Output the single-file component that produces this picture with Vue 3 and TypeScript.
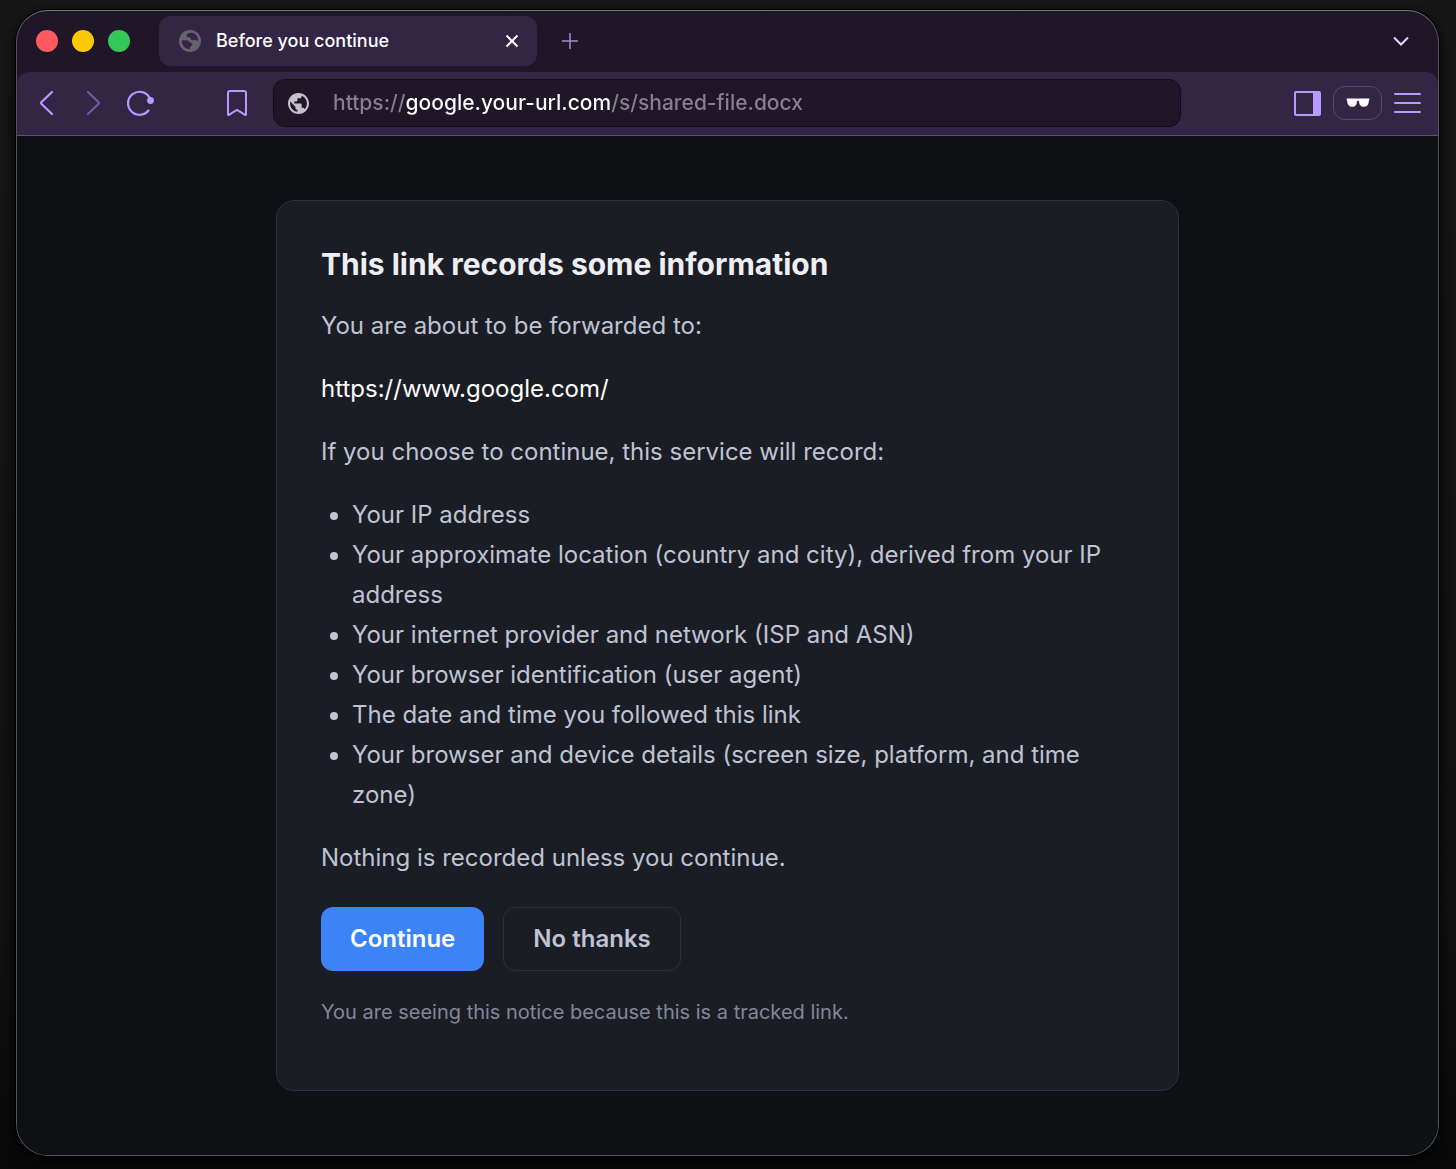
<script setup lang="ts">
import { ref } from 'vue'

const address = ref('https://google.your-url.com/s/shared-file.docx')

const recorded: string[] = [
  'Your IP address',
  'Your approximate location (country and city), derived from your IP address',
  'Your internet provider and network (ISP and ASN)',
  'Your browser identification (user agent)',
  'The date and time you followed this link',
  'Your browser and device details (screen size, platform, and time zone)',
]
</script>

<template>
  <div class="desktop">
    <div class="window">
      <header class="tabs">
        <div class="lights">
          <button class="light close" aria-label="Close window"></button>
          <button class="light minimise" aria-label="Minimise window"></button>
          <button class="light zoom" aria-label="Zoom window"></button>
        </div>
        <div class="tab">
          <svg class="favicon" viewBox="0 0 22 22" width="22" height="22" aria-hidden="true">
            <circle cx="11" cy="11" r="11" fill="#666370" />
            <path d="M12.500 2.800C9.500 2.500 7.500 4 7.500 5.500C7.500 7 9 7.300 10.300 7.300C11.500 7.300 11.200 9.300 12.500 10C14 10.800 14.500 9.500 16 10C17 10.300 17.500 11 19.300 10.500C19.300 6.500 16.500 3.300 12.500 2.800ZM2.700 10.500C2.600 15.500 6.500 19 10.800 19.300C10.800 17.500 11 16.500 12.300 16C13.800 15.400 13.800 13.300 12 12.800C10.500 12.400 10.300 11 8.500 10.500C7 10.100 5 10.400 2.700 10.500Z" fill="#332544" />
          </svg>
          <span class="title">Before you continue</span>
          <button class="plain tab-close" aria-label="Close tab">
            <svg viewBox="0 0 14 14" width="14" height="14"><path d="M1.500 1.500 12.500 12.500M12.500 1.500 1.500 12.500" stroke="#fff" stroke-width="2" /></svg>
          </button>
        </div>
        <button class="plain new-tab" aria-label="New tab">
          <svg viewBox="0 0 18 18" width="18" height="18"><path d="M9 1V17M1 9H17" stroke="#a392cf" stroke-width="1.500" /></svg>
        </button>
        <button class="plain tab-list" aria-label="Search tabs">
          <svg viewBox="0 0 16 10" width="16" height="10"><path d="M1 1.500 8 8.500 15 1.500" fill="none" stroke="#e2d9fb" stroke-width="2" /></svg>
        </button>
      </header>

      <nav class="toolbar" aria-label="Browser">
        <div class="nav">
          <button class="plain" aria-label="Back">
            <svg viewBox="0 0 28 28" width="28" height="28"><path d="M20 3 9.300 13.200Q8.500 14 9.300 14.800L20 25" fill="none" stroke="#b799ff" stroke-width="2.200" stroke-linecap="round" /></svg>
          </button>
          <button class="plain" aria-label="Forward">
            <svg viewBox="0 0 28 28" width="28" height="28"><path d="M9 3 19.700 13.200Q20.500 14 19.700 14.800L9 25" fill="none" stroke="#735b9f" stroke-width="2.200" stroke-linecap="round" /></svg>
          </button>
          <button class="plain" aria-label="Reload">
            <svg viewBox="0 0 28 28" width="28" height="28"><path d="M23.500 8.500A11.500 11.500 0 1 0 22.500 21.500" fill="none" stroke="#b799ff" stroke-width="2.200" stroke-linecap="round" /><circle cx="24.500" cy="11.500" r="3.400" fill="#b799ff" /></svg>
          </button>
        </div>
        <button class="plain bookmark" aria-label="Bookmark this page">
          <svg viewBox="0 0 20 28" width="20" height="28"><path d="M3 2H17Q19 2 19 4V25.200Q19 26.600 17.700 25.700L10 21 2.300 25.700Q1 26.600 1 25.200V4Q1 2 3 2Z" fill="none" stroke="#b799ff" stroke-width="2" /></svg>
        </button>
        <div class="address">
          <svg viewBox="2 2 20 20" width="21" height="21" aria-hidden="true"><path fill="#c4c2c8" d="M12 2C6.480 2 2 6.480 2 12s4.480 10 10 10 10-4.480 10-10S17.520 2 12 2zm-1 17.930c-3.950-.49-7-3.850-7-7.930 0-.62.08-1.210.21-1.790L9 15v1c0 1.100.9 2 2 2v1.930zm6.900-2.540c-.26-.81-1-1.390-1.900-1.390h-1v-3c0-.55-.45-1-1-1H8v-2h2c.55 0 1-.45 1-1V7h2c1.100 0 2-.9 2-2v-.41c2.930 1.190 5 4.060 5 7.410 0 2.080-.8 3.970-2.100 5.390z" /></svg>
          <input v-model="address" type="text" aria-label="Address" spellcheck="false" />
        </div>
        <div class="actions">
          <button class="plain" aria-label="Side panel">
            <svg viewBox="0 0 27 25" width="27" height="25"><rect x="1" y="1" width="25" height="23" rx="1" fill="none" stroke="#b799ff" stroke-width="2" /><path d="M19 1H26V24H19Z" fill="#b799ff" /></svg>
          </button>
          <button class="private" aria-label="Private window">
            <svg viewBox="0 0 24 10" width="24" height="10"><path d="M1 .5H23Q23.800.5 23.500 1.300L22.900 2.500Q22.700 8.500 18.500 8.800C14.500 9 13.300 7 13 3H11C10.700 7 9.500 9 5.500 8.800Q1.300 8.500 1.100 2.500L.5 1.300Q.2.500 1 .5Z" fill="#fff" /></svg>
          </button>
          <button class="plain" aria-label="Menu">
            <svg viewBox="0 0 27 22" width="27" height="22"><path d="M1 2H26M1 11H26M1 20H26" stroke="#b799ff" stroke-width="2" stroke-linecap="round" /></svg>
          </button>
        </div>
      </nav>

      <main class="page">
        <article class="card">
          <h1>This link records some information</h1>
          <p>You are about to be forwarded to:</p>
          <p><a href="https://www.google.com/">https://www.google.com/</a></p>
          <p>If you choose to continue, this service will record:</p>
          <ul>
            <li v-for="item in recorded" :key="item">{{ item }}</li>
          </ul>
          <p>Nothing is recorded unless you continue.</p>
          <div class="choices">
            <button class="primary">Continue</button>
            <button class="secondary">No thanks</button>
          </div>
          <p class="note">You are seeing this notice because this is a tracked link.</p>
        </article>
      </main>
    </div>
  </div>
</template>

<style>
body {
  margin: 0;
  background: #111;
}
</style>

<style scoped>
.desktop {
  box-sizing: border-box;
  display: flex;
  min-height: 100vh;
  padding: 10px 17px 13px 16px;
  background: linear-gradient(#171717, #111 80%, #090909);
  font-family: Inter, "Liberation Sans", sans-serif;
}

button {
  font: inherit;
  cursor: pointer;
}

.window {
  flex: 1;
  min-width: 0;
  display: flex;
  flex-direction: column;
  overflow: hidden;
  border: 1px solid #55545a;
  border-top-color: #77737c;
  border-radius: 32px;
  background: #1f1628;
  box-shadow: 0 0 0 1px #000, 0 4px 16px #000;
}

.plain {
  display: flex;
  align-items: center;
  justify-content: center;
  padding: 0;
  border: 0;
  background: none;
}

.tabs {
  box-sizing: border-box;
  display: flex;
  align-items: center;
  height: 61px;
  padding: 0 29px 2px 19px;
}

.lights {
  display: flex;
  gap: 14px;
  margin-right: 29px;
}

.light {
  width: 22px;
  height: 22px;
  padding: 0;
  border: 0;
  border-radius: 50%;
}

.close {
  background: #ff5a5f;
}

.minimise {
  background: #fcc800;
}

.zoom {
  background: #34c759;
}

.tab {
  box-sizing: border-box;
  display: flex;
  align-items: center;
  width: 378px;
  height: 50px;
  padding: 0 18px 0 20px;
  border-radius: 12px;
  background: #332544;
}

.title {
  flex: 1;
  margin-left: 15px;
  color: #fff;
  font-size: 18px;
  font-weight: 500;
}

.new-tab {
  margin-left: 24px;
}

.tab-list {
  margin-left: auto;
}

.toolbar {
  box-sizing: border-box;
  display: flex;
  align-items: center;
  height: 64px;
  padding: 0 17px 1px 15px;
  border-bottom: 1px solid #5f4a8c;
  border-radius: 12px 12px 0 0;
  background: #332544;
}

.nav {
  display: flex;
  gap: 19px;
}

.bookmark {
  margin-left: 73px;
}

.address {
  box-sizing: border-box;
  display: flex;
  align-items: center;
  flex: 1;
  gap: 24px;
  height: 48px;
  margin: 0 113px 0 26px;
  padding: 0 14px;
  border: 1px solid #140c1b;
  border-radius: 12px;
  background: #1f1628;
}

.address input {
  flex: 1;
  min-width: 0;
  height: 32px;
  padding: 0;
  border: 0;
  outline: 0;
  background: linear-gradient(90deg, #87818d 73px, #fff 73px 279px, #87818d 279px);
  background-clip: text;
  color: transparent;
  caret-color: #fff;
  font: 500 21px/32px Inter, "Liberation Sans", sans-serif;
}

.actions {
  display: flex;
  align-items: center;
  gap: 12px;
}

.private {
  display: flex;
  align-items: center;
  justify-content: center;
  width: 49px;
  height: 34px;
  padding: 0;
  border: 1px solid #5a4483;
  border-radius: 12px;
  background: none;
}

.page {
  flex: 1;
  padding: 64px 24px;
  background: #0d1114;
}

.card {
  box-sizing: border-box;
  max-width: 903px;
  margin: 0 auto;
  padding: 41px 44px 62px;
  border: 1px solid #2c303b;
  border-radius: 18px;
  background: #1b1d25;
  color: #bfc3d3;
  font-size: 24px;
  line-height: 40px;
}

h1 {
  margin: 0 0 20px;
  color: #eeeef3;
  font-size: 30px;
  line-height: 44px;
  font-weight: 700;
}

p {
  margin: 0 0 23px;
}

a {
  color: #fff;
  text-decoration: none;
}

ul {
  margin: 0 0 23px;
  padding-left: 31px;
}

.choices {
  display: flex;
  gap: 19px;
  margin: 29px 0 25px;
}

.choices button {
  height: 64px;
  border-radius: 12px;
  font-weight: 600;
}

.primary {
  padding: 0 29px;
  border: 0;
  background: #3b83f6;
  color: #fff;
}

.secondary {
  padding: 0 29px;
  border: 1px solid #2c303b;
  background: none;
  color: #bfc3d3;
}

.note {
  margin: 0;
  color: #828799;
  font-size: 20px;
  line-height: 32px;
}
</style>
